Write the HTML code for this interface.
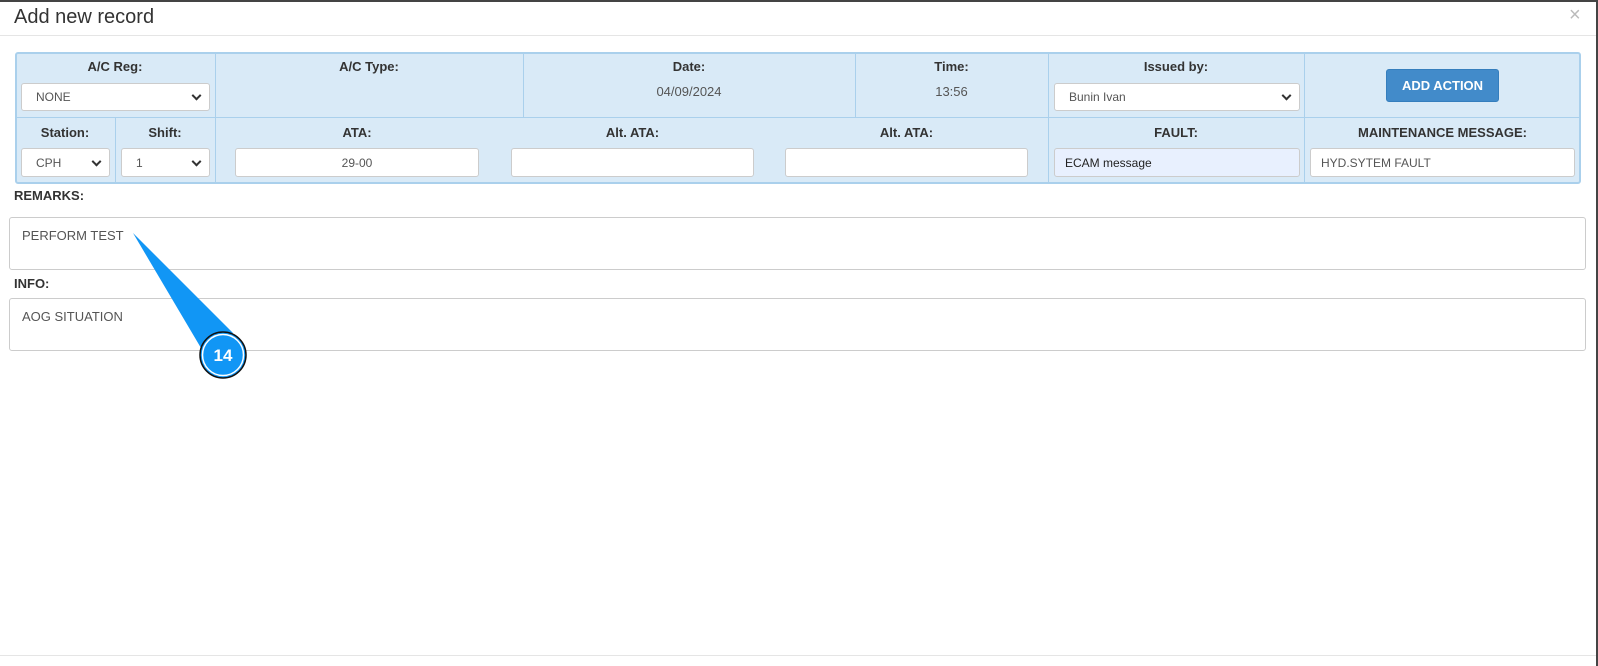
<!DOCTYPE html>
<html><head><meta charset="utf-8"><style>
*{box-sizing:border-box;margin:0;padding:0}
body{width:1598px;height:666px;background:#fff;font-family:"Liberation Sans",Arial,sans-serif;position:relative;overflow:hidden;color:#333}
.a{position:absolute}
.frame{left:0;top:0;width:1598px;height:666px;border-top:2px solid #444;border-right:2px solid #444}
.title{left:14px;top:6px;font-size:20px;color:#333}
.close{left:1569px;top:4px;font-size:20px;color:#bbb}
.hline{left:0;width:1596px;height:1px;background:#e5e5e5}
.tbl{left:15px;top:52px;width:1566px;height:132px;background:#d9eaf7;border:2px solid #aad0ec;border-radius:3px}
.vl{width:1px;background:#aad0ec}
.lbl{font-size:13px;font-weight:bold;color:#333;text-align:center}
.val{font-size:13px;color:#555;text-align:center}
.in{background:#fff;border:1px solid #ccc;border-radius:3px;font-size:12px;color:#555;padding-left:14px;display:flex;align-items:center}
.in.c{justify-content:center;padding-left:0}
.sel::after{content:"";position:absolute;right:9px;top:50%;width:5px;height:5px;border-right:2px solid #333;border-bottom:2px solid #333;transform:translateY(-70%) rotate(45deg)}
.btn{left:1386px;top:69px;width:113px;height:33px;background:#428bca;border:1px solid #357ebd;border-radius:3px;color:#fff;font-weight:bold;font-size:13px;display:flex;align-items:center;justify-content:center}
.ta{left:9px;width:1577px;height:53px;border:1px solid #ccc;border-radius:3px;font-size:13px;color:#555;padding:10px 12px}
</style></head><body>
<div class="a frame"></div>
<div class="a title">Add new record</div>
<div class="a close">×</div>
<div class="a hline" style="top:35px"></div>
<div class="a hline" style="top:655px"></div>

<div class="a tbl"></div>
<div class="a" style="left:16px;top:117px;width:1564px;height:1px;background:#aad0ec"></div>
<div class="a vl" style="left:215px;top:53px;height:130px"></div>
<div class="a vl" style="left:523px;top:53px;height:64px"></div>
<div class="a vl" style="left:855px;top:53px;height:64px"></div>
<div class="a vl" style="left:1048px;top:53px;height:130px"></div>
<div class="a vl" style="left:1304px;top:53px;height:130px"></div>
<div class="a vl" style="left:115px;top:118px;height:65px"></div>

<div class="a lbl" style="left:15px;top:59px;width:200px">A/C Reg:</div>
<div class="a in sel" style="left:21px;top:83px;width:189px;height:28px">NONE</div>
<div class="a lbl" style="left:215px;top:59px;width:308px">A/C Type:</div>
<div class="a lbl" style="left:523px;top:59px;width:332px">Date:</div>
<div class="a val" style="left:523px;top:84px;width:332px">04/09/2024</div>
<div class="a lbl" style="left:855px;top:59px;width:193px">Time:</div>
<div class="a val" style="left:855px;top:84px;width:193px">13:56</div>
<div class="a lbl" style="left:1048px;top:59px;width:256px">Issued by:</div>
<div class="a in sel" style="left:1054px;top:83px;width:246px;height:28px">Bunin Ivan</div>
<div class="a btn">ADD ACTION</div>

<div class="a lbl" style="left:15px;top:125px;width:100px">Station:</div>
<div class="a in sel" style="left:21px;top:148px;width:89px;height:29px">CPH</div>
<div class="a lbl" style="left:115px;top:125px;width:100px">Shift:</div>
<div class="a in sel" style="left:121px;top:148px;width:89px;height:29px">1</div>
<div class="a lbl" style="left:235px;top:125px;width:244px">ATA:</div>
<div class="a in c" style="left:235px;top:148px;width:244px;height:29px">29-00</div>
<div class="a lbl" style="left:511px;top:125px;width:243px">Alt. ATA:</div>
<div class="a in" style="left:511px;top:148px;width:243px;height:29px"></div>
<div class="a lbl" style="left:785px;top:125px;width:243px">Alt. ATA:</div>
<div class="a in" style="left:785px;top:148px;width:243px;height:29px"></div>
<div class="a lbl" style="left:1048px;top:125px;width:256px">FAULT:</div>
<div class="a in" style="left:1054px;top:148px;width:246px;height:29px;background:#e8f0fe;color:#222;padding-left:10px">ECAM message</div>
<div class="a lbl" style="left:1304px;top:125px;width:277px">MAINTENANCE MESSAGE:</div>
<div class="a in" style="left:1310px;top:148px;width:265px;height:29px;padding-left:10px">HYD.SYTEM FAULT</div>

<div class="a lbl" style="left:14px;top:188px;text-align:left">REMARKS:</div>
<div class="a ta" style="top:217px">PERFORM TEST</div>
<div class="a lbl" style="left:14px;top:276px;text-align:left">INFO:</div>
<div class="a ta" style="top:298px">AOG SITUATION</div>

<svg class="a" style="left:0;top:0" width="400" height="400">
<polygon points="133,233 201,348 233,333" fill="#1196f5"/>
<circle cx="223" cy="355" r="23" fill="#1196f5" stroke="#111" stroke-width="1.5"/>
<circle cx="223" cy="355" r="20.5" fill="none" stroke="#fff" stroke-width="1.5"/>
<text x="223" y="361" text-anchor="middle" font-family="Liberation Sans" font-weight="bold" font-size="17" fill="#fff">14</text>
</svg>
</body></html>
